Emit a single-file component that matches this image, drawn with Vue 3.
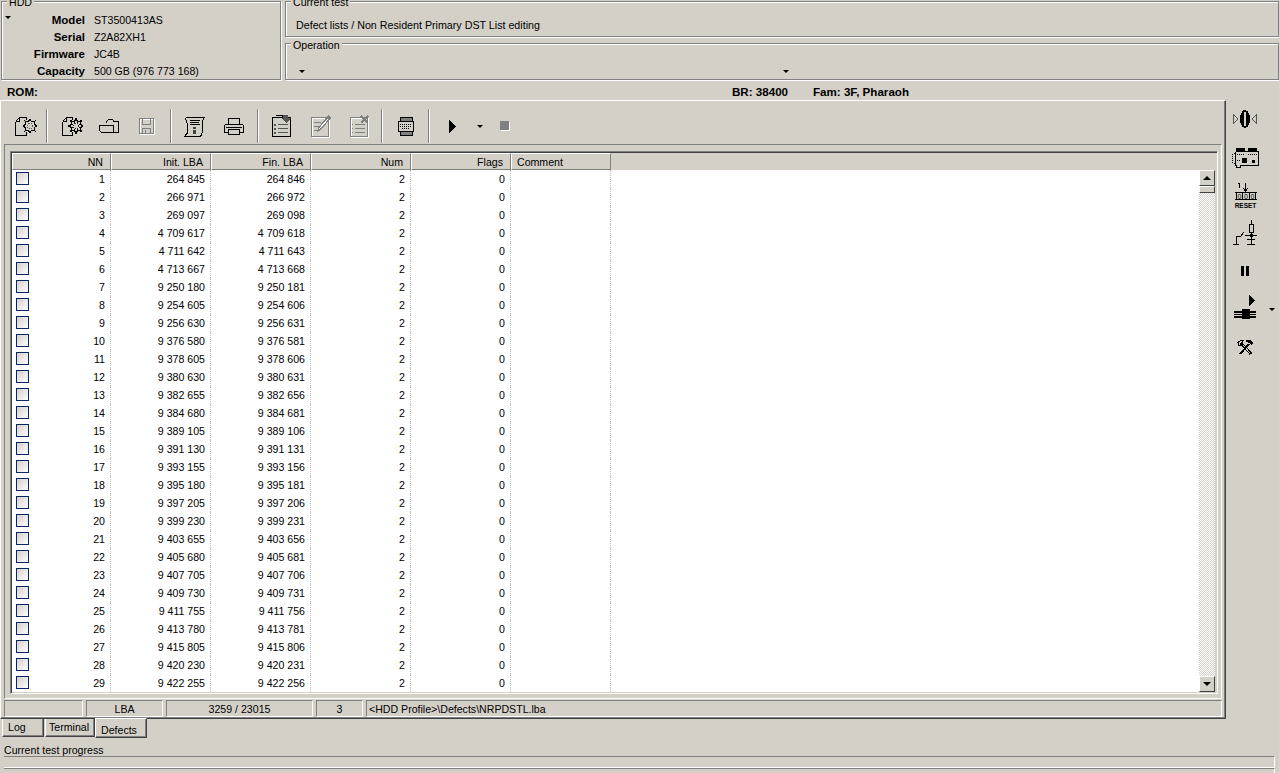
<template>
  <div class="app">
    <div class="top">
      <div class="group hdd">
        <span class="legend">HDD</span>
        <span class="tri tri-hdd"></span>
        <div class="info" v-for="r in hddInfo" :key="r[0]">
          <b>{{ r[0] }}</b><span>{{ r[1] }}</span>
        </div>
      </div>
      <div class="right-groups">
        <div class="group current">
          <span class="legend">Current test</span>
          <div class="current-text">Defect lists / Non Resident Primary DST List editing</div>
        </div>
        <div class="group operation">
          <span class="legend">Operation</span>
          <div class="op-row"><span class="tri"></span><span class="tri"></span></div>
        </div>
      </div>
    </div>

    <div class="rom-row">
      <b class="rom">ROM:</b>
      <b class="br">BR: 38400</b>
      <b class="fam">Fam: 3F, Pharaoh</b>
    </div>

    <div class="middle">
      <div class="panel">
        <div class="toolbar">
          <div class="btn">
            <svg width="24" height="24" fill="none" stroke="#000"><path d="M2.500 7.500 6.500 3.500H13.500V6M2.500 7.500V21.500H13.500V18M2.500 7.500H6.500V3.500" /><path :d="gear" fill="#d4d0c8" /><circle cx="17" cy="12" r="2.500" stroke="#555" stroke-dasharray="1 1" /></svg>
          </div>
          <i class="sep s1"></i>
          <div class="btn">
            <svg width="24" height="24" fill="none" stroke="#000"><path d="M3.500 7.500 7.500 3.500H13.500V6M3.500 7.500V21.500H13.500V18M3.500 7.500H7.500V3.500" /><path :d="gear" fill="#d4d0c8" stroke-width="1.500" /><circle cx="17" cy="12" r="2.500" stroke="#333" stroke-dasharray="1 1" /></svg>
          </div>
          <div class="btn">
            <svg width="24" height="24" fill="none" stroke="#000"><path d="M9.500 9V7.500L11.500 5.500H15.500L17 7.500H21.500V17.500Q21.500 18.500 20 18.500H16.500" /><path d="M2.500 11.500H16.500V18.500H6Q2.500 18.500 2.500 15.500Z" /></svg>
          </div>
          <div class="btn">
            <svg width="24" height="24" fill="none" stroke="#808080"><path stroke="#fff" d="M5.500 5.500H19.500V20.500H5.500Z" /><path d="M4.500 4.500H18.500V19.500H4.500ZM7.500 4.500V10.500H15.500V4.500M7.500 19.500V14.500H15.500V19.500M10.500 15.500V19.500" /></svg>
          </div>
          <i class="sep s2"></i>
          <div class="btn">
            <svg width="24" height="24" fill="none" stroke="#000"><path d="M6.500 3.500H22.500L20 7.500V19Q20 22.500 16.500 22.500H2.500L5 19.500V9Q5 6 3.500 5Q3.500 3.500 6.500 3.500Z" /><path d="M8 6.500H18M8 8.500H17M8 10.500H18" /><path fill="#444" stroke="none" d="M11 13h3v2h-3zM11 16h3v4h-3z" /></svg>
          </div>
          <div class="btn b2">
            <svg width="24" height="24" fill="none" stroke="#000"><path d="M6.500 10V4.500H17.500V10M2.500 18.500V12.500Q2.500 10.500 5 10.500H19Q21.500 10.500 21.500 12.500V18.500H18M6 18.500H2.500" /><path d="M6.500 15.500H17.500V20.500H6.500Z" /><path d="M4 13.500H20" /></svg>
          </div>
          <i class="sep s3"></i>
          <div class="btn">
            <svg width="24" height="24" fill="none" stroke="#000"><path d="M3.500 3.500H21.500V22.500H3.500Z" /><path d="M7 1.500H13V3.500" /><path stroke="#555" d="M9 10.500H19M9 14.500H19M9 18.500H19" /><path stroke="#555" stroke-width="2" d="M5 10.500H7M5 14.500H7M5 18.500H7" /><path fill="#555" stroke="none" d="M14 1h5v3h3l-5 5-5-5h2z" /></svg>
          </div>
          <div class="btn">
            <svg width="24" height="24" fill="none" stroke="#808080"><path stroke="#fff" d="M4.500 4.500H21.500V23.500H4.500Z" /><path d="M3.500 3.500H20.500V22.500H3.500Z" /><path d="M6 8.500H13M6 12.500H11M6 16.500H9" /><path fill="#808080" stroke="none" d="M20 1l3 3-10 12-4 2 1-4z" /><path stroke="#fff" d="M11 15l9-10" /></svg>
          </div>
          <div class="btn">
            <svg width="24" height="24" fill="none" stroke="#808080"><path stroke="#fff" d="M4.500 4.500H21.500V23.500H4.500Z" /><path d="M3.500 3.500H20.500V22.500H3.500Z" /><path d="M8 10.500H18M8 14.500H18M8 18.500H18M5 10.500H6M5 14.500H6M5 18.500H6" /><path stroke-width="2.400" d="M14 2l7 7M21 2l-7 7" /></svg>
          </div>
          <i class="sep s4"></i>
          <div class="btn">
            <svg width="24" height="24" fill="none" stroke="#000"><path fill="#808080" d="M7.500 3.500H19.500V21.500H7.500Z" /><path fill="#d4d0c8" d="M5.500 7.500H20.500V17.500H5.500Z" /><path stroke-dasharray="1 1" d="M7 10.500H19M7 12.500H19M9 14.500H17" /></svg>
          </div>
          <i class="sep s5"></i>
          <div class="btn">
            <svg width="24" height="24"><path d="M10 6 17 12.500 10 19Z" /></svg>
          </div>
          <span class="tri tri-play"></span>
          <span class="stop"></span>
        </div>

        <div class="table-box">
          <div class="grid">
            <div class="grid-inner">
              <div class="gh">
                <div v-for="h in headers" :key="h" class="hc" :class="{ left: h === 'Comment' }">{{ h }}</div>
              </div>
              <div class="gb">
                <div class="gr" v-for="(v, i) in inits" :key="v">
                  <div class="c"><span class="check"></span>{{ i + 1 }}</div>
                  <div class="c">{{ fmt(v) }}</div>
                  <div class="c">{{ fmt(v + 1) }}</div>
                  <div class="c">2</div>
                  <div class="c">0</div>
                  <div class="c"></div>
                </div>
              </div>
            </div>
            <div class="scroll">
              <div class="sb-btn"><span class="arr up"></span></div>
              <div class="sb-thumb"></div>
              <div class="sb-track"></div>
              <div class="sb-btn"><span class="arr down"></span></div>
            </div>
          </div>
        </div>

        <div class="status">
          <div class="st st1"></div>
          <div class="st st2">LBA</div>
          <div class="st st3">3259 / 23015</div>
          <div class="st st4">3</div>
          <div class="st st5">&lt;HDD Profile&gt;\Defects\NRPDSTL.lba</div>
        </div>
      </div>

      <div class="side">
        <div class="side-item">
          <svg width="36" height="24" fill="none" stroke="#555"><path d="M6.500 7.500V16.500L11 12ZM29.500 7.500V16.500L25 12Z" /><path fill="#000" fill-rule="evenodd" stroke="none" d="M13 12a5 9 0 1 0 10 0a5 9 0 1 0-10 0ZM16.500 12a1.500 7.500 0 1 1 3 0a1.500 7.500 0 1 1-3 0Z" /></svg>
        </div>
        <div class="side-item">
          <svg width="30" height="24" fill="none" stroke="#000"><path d="M5.500 6.500H28.500V20.500H10.500V22.500H6.500V20.500H5.500V6.500" /><path stroke-dasharray="1 1" d="M2.500 9V18M3.500 8.500H5M3.500 18.500H5" /><path fill="#000" stroke="none" d="M6 3h9v3H6zM18 3h9v3h-9zM12 13h5v5h-5zM22 15h3v3h-3z" /><path stroke-dasharray="1 1" d="M7 9.500H15M7 15.500H10M18 9.500H27" /></svg>
        </div>
        <div class="side-item">
          <svg width="30" height="30" fill="none" stroke="#000"><path d="M9.500 3V8M8 4l1.500-1M15.500 3V10M13 8l2.500 3 2.500-3" /><path d="M5 12.500H27M5 19.500H27M6.500 13V19M12.500 13V19M19.500 13V19M25.500 13V19" /><text x="9.500" y="18.500" class="dig">0</text><text x="16" y="18.500" class="dig">0</text><text x="22.500" y="18.500" class="dig">0</text><text x="15.500" y="28" class="reset-text">RESET</text></svg>
        </div>
        <div class="side-item">
          <svg width="30" height="30" fill="none" stroke="#000"><path d="M21.500 2V6M19.500 6.500H23.500V14.500H19.500ZM21.500 15V27M15 17.500H27M17 21.500H25M17 26.500H25M3 26.500H9M6.500 26V18.500H11M11 18L14 14" /><circle cx="21.500" cy="17.500" r="1.500" fill="#000" /></svg>
        </div>
        <div class="side-item">
          <svg width="24" height="24"><path d="M8 7h3v10H8zM13 7h3v10h-3z" /></svg>
        </div>
        <div class="side-item">
          <svg width="30" height="30"><path d="M19 1 25 6.500 19 12ZM4 17H26V19H4ZM4 20H26V21H4ZM4 22H26V24H4ZM12 14.500H20V25H12Z" /></svg>
          <span class="tri tri-side"></span>
        </div>
        <div class="side-item">
          <svg width="24" height="24" fill="none" stroke="#000"><path stroke-width="3" d="M8 8 18 19" /><path stroke="#d4d0c8" d="M9 9 17 18" /><path stroke-width="2" d="M16 9 7 19" /><path fill="#000" stroke="none" d="M13 5h4l3 3-2 2-2-2-3-1z" /><path d="M5 7.500 7.500 5.500H10.500L9 7.500 10 9 8 10.500H6Z" /></svg>
        </div>
      </div>
    </div>

    <div class="tabs">
      <div class="tab tab-log">Log</div>
      <div class="tab tab-term">Terminal</div>
      <div class="tab tab-active">Defects</div>
    </div>

    <div class="progress-label">Current test progress</div>
    <div class="bar"></div>
    <div class="bar"></div>
  </div>
</template>

<script setup>
const hddInfo = [
  ["Model", "ST3500413AS"],
  ["Serial", "Z2A82XH1"],
  ["Firmware", "JC4B"],
  ["Capacity", "500 GB (976 773 168)"],
];
const headers = ["NN", "Init. LBA", "Fin. LBA", "Num", "Flags", "Comment"];
const inits = [
  264845, 266971, 269097, 4709617, 4711642, 4713667, 9250180, 9254605, 9256630,
  9376580, 9378605, 9380630, 9382655, 9384680, 9389105, 9391130, 9393155,
  9395180, 9397205, 9399230, 9403655, 9405680, 9407705, 9409730, 9411755,
  9413780, 9415805, 9420230, 9422255,
];
function fmt(n) {
  return String(n).replace(/\B(?=(\d{3})+$)/g, " ");
}
// jagged cog used by the two first toolbar icons
function cog(cx, cy, r1, r2, n) {
  let d = "";
  for (let i = 0; i < n * 2; i++) {
    const r = i % 2 ? r2 : r1;
    const a = (Math.PI * i) / n;
    d += (i ? "L" : "M") + (cx + r * Math.cos(a)).toFixed(1) + " " + (cy + r * Math.sin(a)).toFixed(1);
  }
  return d + "Z";
}
const gear = cog(17, 12, 7, 4.5, 8);
</script>

<style>
html,
body {
  margin: 0;
  background: #d4d0c8;
  overflow: hidden;
}
</style>

<style scoped>
.app {
  width: 1279px;
  height: 773px;
  overflow: hidden;
  background: #d4d0c8;
  color: #000;
  font-family: "Liberation Sans", Arial, sans-serif;
  font-size: 10.6px;
  line-height: 13px;
}
svg {
  shape-rendering: crispEdges;
}
.top {
  display: flex;
  height: 81px;
  padding: 1px 0 0 1px;
  box-sizing: border-box;
  gap: 4px;
}
.group {
  position: relative;
  box-sizing: border-box;
  border: 1px solid #808080;
  box-shadow: 1px 1px 0 #fff, inset 1px 1px 0 #fff;
}
.legend {
  position: absolute;
  top: -5px;
  left: 5px;
  padding: 0 2px;
  background: #d4d0c8;
  height: 10px;
  line-height: 11px;
}
.operation .legend {
  line-height: 13px;
}
.hdd {
  width: 280px;
  height: 79px;
  padding-top: 10px;
}
.tri {
  display: inline-block;
  width: 0;
  height: 0;
  border-left: 3px solid transparent;
  border-right: 3px solid transparent;
  border-top: 3px solid #000;
}
.tri-hdd {
  position: absolute;
  left: 3px;
  top: 14px;
}
.info {
  display: flex;
  height: 17px;
  align-items: center;
}
.info b {
  width: 83px;
  text-align: right;
  font-size: 11.5px;
}
.info span {
  margin-left: 9px;
  font-size: 10.6px;
}
.right-groups {
  flex: 1;
  display: flex;
  flex-direction: column;
  gap: 6px;
}
.current {
  height: 36px;
  padding: 17px 0 0 10px;
}
.current-text {
  font-size: 10.7px;
}
.operation {
  height: 37px;
}
.op-row {
  display: flex;
  padding: 26px 0 0 13px;
  gap: 478px;
}
.rom-row {
  display: flex;
  height: 19px;
  align-items: center;
  font-size: 11.6px;
  padding-top: 1px;
  box-sizing: border-box;
}
.rom {
  width: 732px;
  padding-left: 7px;
  box-sizing: border-box;
}
.br {
  width: 81px;
}
.middle {
  display: flex;
  height: 619px;
}
.panel {
  width: 1226px;
  height: 619px;
  box-sizing: border-box;
  border-top: 1px solid #fff;
  border-left: 1px solid #fff;
  border-right: 1px solid #404040;
  border-bottom: 1px solid #404040;
  box-shadow: inset -1px -1px 0 #808080;
  padding: 0 2px 0 3px;
  display: flex;
  flex-direction: column;
}
.toolbar {
  display: flex;
  align-items: center;
  height: 43px;
  box-sizing: border-box;
  padding: 6px 0 0 2px;
}
.btn {
  width: 38px;
  height: 30px;
  display: flex;
  align-items: center;
  justify-content: center;
}
.b2 {
  margin-left: 2px;
}
.sep {
  width: 1px;
  height: 34px;
  background: #808080;
  border-right: 1px solid #fff;
}
.s1 {
  margin: 0 4px 0 2px;
}
.s2 {
  margin: 0 3px 0 4px;
}
.s3 {
  margin: 0 3px 0 4px;
}
.s4 {
  margin: 0 3px 0 3px;
}
.s5 {
  margin: 0 2px 0 4px;
}
.s3 + .btn + .btn,
.s3 + .btn + .btn + .btn {
  margin-left: 1px;
}
.tri-play {
  margin: 1px 13px 0 7px;
}
.stop {
  width: 9px;
  height: 9px;
  background: #808080;
  box-shadow: 1px 1px 0 #fff;
  margin-left: 4px;
}
.table-box {
  height: 555px;
  box-sizing: border-box;
  border: 1px solid;
  border-color: #808080 #fff #fff #808080;
  padding: 6px 3px 4px 5px;
  margin-right: 1px;
}
.grid {
  height: 543px;
  box-sizing: border-box;
  border: 1px solid;
  border-color: #808080 #fff #fff #808080;
  padding: 1px;
  box-shadow: inset 1px 1px 0 #404040;
  display: flex;
  background: #d4d0c8;
}
.grid-inner {
  flex: 1;
  min-width: 0;
  overflow: hidden;
  background: #fff;
}
.gh {
  display: flex;
  height: 17px;
  background: #d4d0c8;
}
.hc {
  width: 100px;
  box-sizing: border-box;
  border-top: 1px solid #fff;
  border-left: 1px solid #fff;
  border-right: 1px solid #808080;
  border-bottom: 1px solid #808080;
  text-align: right;
  padding-right: 7px;
  line-height: 16px;
}
.hc:first-child {
  width: 99px;
}
.hc.left {
  text-align: left;
  padding-left: 5px;
}
.gb {
  height: 522px;
  overflow: hidden;
}
.gr {
  display: flex;
  height: 18px;
}
.c {
  width: 100px;
  height: 18px;
  box-sizing: border-box;
  border-right: 1px dotted #c0c0c0;
  text-align: right;
  padding-right: 5px;
  line-height: 19px;
  position: relative;
}
.c:first-child {
  width: 99px;
}
.check {
  position: absolute;
  left: 4px;
  top: 2px;
  width: 11px;
  height: 11px;
  border: 1px solid #0a246a;
  background: linear-gradient(135deg, #d4d0c8, #fff);
}
.scroll {
  width: 16px;
  display: flex;
  flex-direction: column;
  padding-top: 17px;
  margin-right: 1px;
}
.sb-btn {
  height: 16px;
  box-sizing: border-box;
  background: #d4d0c8;
  border: 1px solid;
  border-color: #fff #404040 #404040 #fff;
  display: flex;
  align-items: center;
  justify-content: center;
}
.sb-thumb {
  height: 7px;
  box-sizing: border-box;
  background: #d4d0c8;
  border: 1px solid;
  border-color: #fff #404040 #404040 #fff;
}
.sb-track {
  flex: 1;
  background: conic-gradient(#d4d0c8 25%, #fff 0 50%, #d4d0c8 0 75%, #fff 0) 0 0 / 2px 2px;
}
.arr {
  width: 0;
  height: 0;
  border-left: 4px solid transparent;
  border-right: 4px solid transparent;
}
.arr.up {
  border-bottom: 4px solid #000;
}
.arr.down {
  border-top: 4px solid #000;
}
.status {
  display: flex;
  gap: 3px;
  height: 17px;
  margin-top: 1px;
  padding-right: 1px;
}
.st {
  box-sizing: border-box;
  border: 1px solid;
  border-color: #808080 #fff #fff #808080;
  text-align: center;
  line-height: 16px;
}
.st1 {
  width: 79px;
}
.st2 {
  width: 77px;
}
.st3 {
  width: 147px;
}
.st4 {
  width: 47px;
}
.st5 {
  flex: 1;
  text-align: left;
  padding-left: 2px;
}
.side {
  flex: 1;
}
.side-item {
  position: relative;
  width: 38px;
  height: 38px;
  display: flex;
  align-items: center;
  justify-content: center;
}
.tri-side {
  position: absolute;
  left: 43px;
  top: 18px;
}
.reset-text {
  font-size: 6.5px;
  font-weight: 700;
  text-anchor: middle;
  fill: #000;
  stroke: none;
  font-family: "Liberation Sans", Arial, sans-serif;
}
.dig {
  font-size: 7px;
  text-anchor: middle;
  fill: #000;
  stroke: none;
  font-family: "Liberation Sans", Arial, sans-serif;
}
.tabs {
  display: flex;
  height: 20px;
  padding-left: 2px;
  align-items: flex-start;
}
.tab {
  box-sizing: border-box;
  height: 18px;
  border-left: 1px solid #fff;
  border-right: 1px solid #404040;
  border-bottom: 1px solid #404040;
  box-shadow: inset -1px -1px 0 #808080;
  line-height: 17px;
}
.tab-log {
  width: 42px;
  padding-left: 5px;
  margin-right: 1px;
}
.tab-term {
  width: 50px;
  padding-left: 3px;
}
.tab-active {
  width: 52px;
  height: 20px;
  border-top: 1px solid #fff;
  margin-top: -1px;
  padding: 3px 0 0 5px;
}
.progress-label {
  padding-left: 4px;
  height: 17px;
  line-height: 22px;
}
.bar {
  width: 1271px;
  margin-left: 4px;
  height: 12px;
  box-sizing: border-box;
  border-top: 1px solid #808080;
  border-bottom: 1px solid #fff;
  border-right: 1px solid #fff;
}
</style>
